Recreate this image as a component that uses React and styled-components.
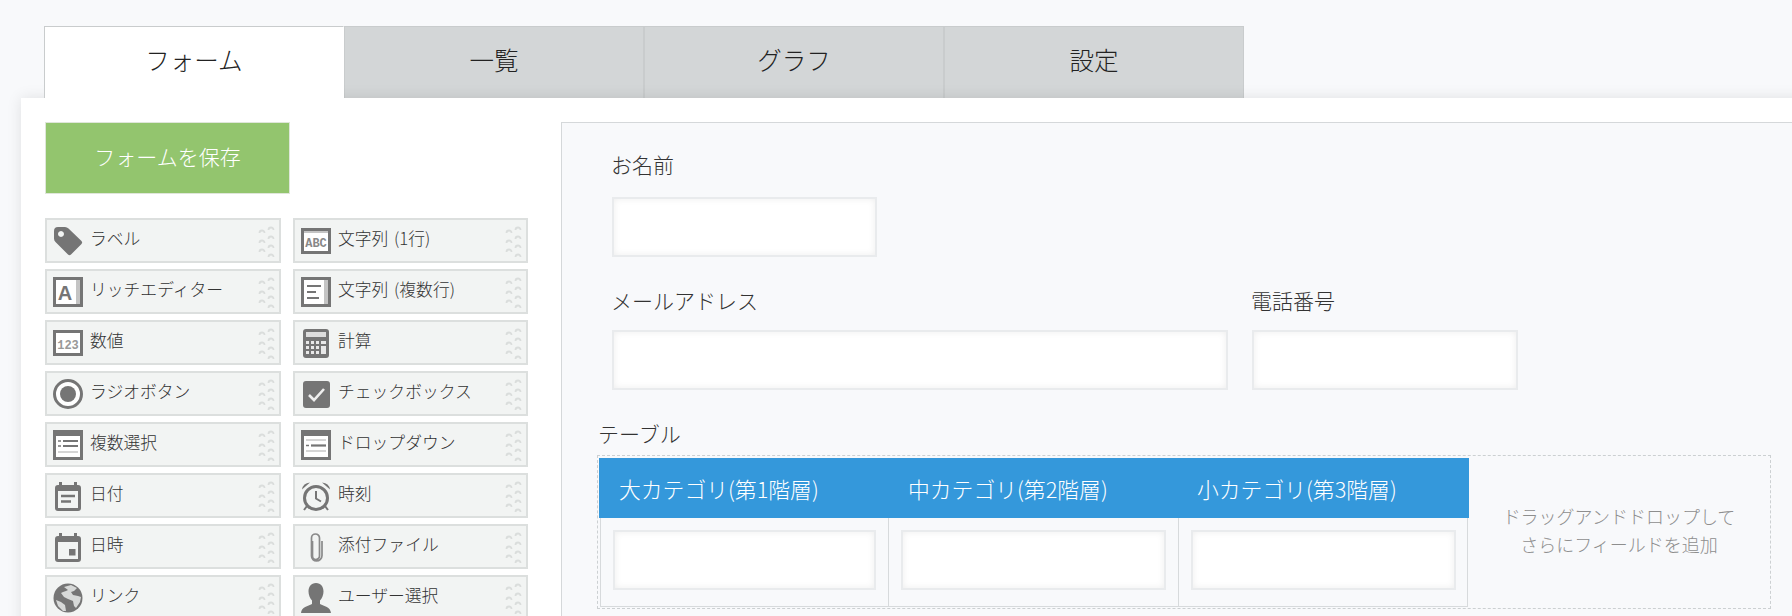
import React from "react";
import styled, { createGlobalStyle } from "styled-components";

const Global = createGlobalStyle`
  html, body { margin: 0; padding: 0; background: #f8f9fb; }
  body { font-family: "Noto Sans CJK JP", "Noto Sans", sans-serif; color: #333; }
  #root { width: 1792px; height: 616px; overflow: hidden; }
`;

const Page = styled.div`
  width: 1792px;
  height: 616px;
  padding-top: 26px;
  box-sizing: border-box;
  overflow: hidden;
`;
const Tabs = styled.div`
  display: flex;
  margin-left: 44px;
  height: 72px;
`;
const Tab = styled.div`
  width: 300px;
  box-sizing: border-box;
  height: 72px;
  display: flex;
  align-items: center;
  justify-content: center;
  padding-bottom: 7px;
  font-size: 24.500px;
  font-weight: 300;
  color: #222;
  background: ${(p) => (p.$active ? "#fff" : "#d3d6d7")};
  border: 1px solid #c9cccd;
  border-bottom: none;
  border-right-color: ${(p) => (p.$active ? "#fff" : "#c9cccd")};
  ${(p) => p.$active && "position: relative; z-index: 2;"}
`;
const Panel = styled.div`
  position: relative;
  z-index: 1;
  margin-left: 21px;
  width: 1800px;
  height: 540px;
  background: #fff;
  box-shadow: 0 0 14px rgba(0, 0, 0, 0.1);
  display: flex;
  padding: 24px 0 0 24px;
  box-sizing: border-box;
`;
const Sidebar = styled.div`
  width: 516px;
  flex: none;
`;
const SaveButton = styled.div`
  width: 245px;
  height: 72px;
  box-sizing: border-box;
  background: #93c56e;
  border: 1px solid #dfe6da;
  color: #fff;
  font-size: 21px;
  font-weight: 300;
  display: flex;
  align-items: center;
  justify-content: center;
  padding-bottom: 5px;
  margin-bottom: 24px;
`;
const Palette = styled.div`
  display: grid;
  grid-template-columns: 236px 235px;
  column-gap: 12px;
  row-gap: 6px;
`;
const Item = styled.div`
  height: 45px;
  box-sizing: border-box;
  border: 2px solid #dcdfde;
  background: #f2f4f3;
  display: flex;
  align-items: center;
  padding: 0 3px 0 6px;
  font-size: 16.800px;
  font-weight: 300;
  color: #333;
`;
const IconBox = styled.svg`
  width: 30px;
  height: 30px;
  flex: none;
  margin-right: 7px;
`;
const ItemLabel = styled.span`
  flex: 1;
  white-space: nowrap;
  line-height: 1;
  padding-bottom: 4px;
  word-spacing: 2px;
`;
const Grip = styled.svg`
  width: 18px;
  height: 36px;
  flex: none;
`;
const Canvas = styled.div`
  flex: 1;
  height: 600px;
  background: #f8f9fb;
  border: 1px solid #d5d8da;
  padding-top: 27px;
  box-sizing: border-box;
`;
const Row = styled.div`
  display: flex;
  gap: 24px;
  padding-left: 50px;
  margin-bottom: ${(p) => p.$mb}px;
`;
const Field = styled.div`
  width: ${(p) => p.$w}px;
`;
const Label = styled.div`
  height: 30px;
  line-height: 28px;
  font-size: 21px;
  font-weight: 300;
  color: #333;
  margin-left: -1px;
  margin-bottom: ${(p) => p.$mb ?? 17}px;
  white-space: nowrap;
`;
const Input = styled.div`
  height: 60px;
  box-sizing: border-box;
  background: #fff;
  border: 2px solid #e9ebed;
  box-shadow: inset 0 0 7px rgba(0, 0, 0, 0.07);
`;
const TableSection = styled.div`
  padding-left: 35px;
`;
const TableLabel = styled(Label)`
  margin: 0 0 6px 1px;
`;
const DropFrame = styled.div`
  width: 1174px;
  height: 154px;
  box-sizing: border-box;
  border: 1px dashed #ccd0d2;
  padding: 2px 1px;
  display: flex;
`;
const Table = styled.div`
  width: 870px;
  flex: none;
`;
const HeaderRow = styled.div`
  display: grid;
  grid-template-columns: 289px 290px 291px;
  height: 60px;
  background: #3498db;
  color: #fff;
  font-size: 21.800px;
  font-weight: 300;
`;
const HeaderCell = styled.div`
  padding: 0 0 0 ${(p) => p.$pl}px;
  display: flex;
  align-items: center;
  white-space: nowrap;
`;
const BodyRow = styled.div`
  display: grid;
  grid-template-columns: 288px 290px 289px;
  height: 89px;
  box-sizing: border-box;
  margin: 0 1px;
  border: 1px solid #d7dadc;
  border-top: none;
`;
const BodyCell = styled.div`
  padding: 12px 12px 0;
  border-right: ${(p) => (p.$last ? "none" : "1px solid #d7dadc")};
`;
const DropHint = styled.div`
  flex: 1;
  display: flex;
  align-items: center;
  justify-content: center;
  text-align: center;
  font-size: 18px;
  font-weight: 300;
  line-height: 28px;
  color: #8e8e8e;
  padding-bottom: 4px;
`;

const C = "#757575";
const Frame = ({ y = 1.5, h = 27 }) => (
  <rect x="1.5" y={y} width="27" height={h} fill="#fff" stroke={C} strokeWidth="3" />
);
const icons = {
  tag: (
    <path fill={C} fillRule="evenodd" d="M1 5a4 4 0 0 1 4-4h7q2 0 3.5 1.5L28.5 15q1.5 1.5 0 3L18 28.500q-1.500 1.500-3 0L2.500 16Q1 14.500 1 12.500zM8 5a3 3 0 1 0 .01 0z" />
  ),
  rich: (
    <>
      <Frame />
      <rect x="23" y="3" width="4" height="24" fill="#c4c4c4" />
      <text x="12" y="23" fontFamily="Liberation Sans" fontWeight="700" fontSize="20" fill={C} textAnchor="middle">A</text>
    </>
  ),
  num: (
    <>
      <Frame y={3.5} h={23} />
      <text x="15" y="20.500" fontFamily="Liberation Mono" fontWeight="700" fontSize="12" fill="#999" textAnchor="middle">123</text>
    </>
  ),
  abc: (
    <>
      <Frame y={3.5} h={23} />
      <rect x="3" y="5" width="24" height="2" fill="#c4c4c4" />
      <text x="15" y="20.500" fontFamily="Liberation Mono" fontWeight="700" fontSize="12" fill="#888" textAnchor="middle">ABC</text>
    </>
  ),
  radio: (
    <>
      <circle cx="15" cy="15" r="13.500" fill="#fff" stroke={C} strokeWidth="3" />
      <circle cx="15" cy="15" r="8" fill={C} />
    </>
  ),
  multi: (
    <>
      <Frame />
      <rect x="3" y="3" width="24" height="3" fill={C} />
      <path d="M10 11h15M10 16h15" stroke={C} strokeWidth="2.200" />
      <path d="M5 11h3M5 16h3" stroke={C} strokeWidth="1.500" />
      <rect x="5" y="21" width="20" height="2" fill="#d5d5d5" />
    </>
  ),
  lines: (
    <>
      <Frame />
      <rect x="23" y="3" width="4" height="24" fill="#c4c4c4" />
      <path d="M6 9h14M6 15h9M6 21h12" stroke={C} strokeWidth="2.200" />
    </>
  ),
  calc: (
    <>
      <rect x="2" y="1" width="26" height="29" rx="3" fill={C} />
      <rect x="5" y="4" width="20" height="5" fill="#ddd" />
      <path d="M5 13h3v3H5zM10 13h3v3h-3zM15 13h3v3h-3zM20 13h5v3h-5zM5 18h3v3H5zM10 18h3v3h-3zM15 18h3v3h-3zM5 23h3v3H5zM10 23h3v3h-3zM15 23h3v3h-3zM20 18h5v8h-5z" fill="#e8e8e8" />
    </>
  ),
  check: (
    <>
      <rect x="2" y="2" width="27" height="27" rx="3" fill={C} />
      <path d="M8 16l5 5 10-11" fill="none" stroke="#eee" strokeWidth="2.600" />
    </>
  ),
  drop: (
    <>
      <Frame />
      <rect x="3" y="3" width="24" height="3" fill={C} />
      <rect x="5" y="9" width="20" height="2" fill="#d5d5d5" />
      <path d="M10 15.500h15" stroke={C} strokeWidth="2.200" />
      <path d="M5 15.500h3" stroke={C} strokeWidth="1.500" />
      <rect x="5" y="20" width="20" height="2" fill="#d5d5d5" />
    </>
  ),
  date: (
    <>
      <path fill={C} fillRule="evenodd" d="M6 1h3v3h12V1h3v3h1a3 3 0 0 1 3 3v20a3 3 0 0 1-3 3H5a3 3 0 0 1-3-3V7a3 3 0 0 1 3-3h1zM5 10v17h20V10z" />
      <path d="M8 15h14M8 20.500h10" stroke={C} strokeWidth="2.400" />
    </>
  ),
  datetime: (
    <>
      <path fill={C} fillRule="evenodd" d="M6 1h3v3h12V1h3v3h1a3 3 0 0 1 3 3v20a3 3 0 0 1-3 3H5a3 3 0 0 1-3-3V7a3 3 0 0 1 3-3h1zM5 10v17h20V10z" />
      <rect x="16" y="17" width="6.500" height="6.500" fill={C} />
    </>
  ),
  clock: (
    <>
      <circle cx="15" cy="17" r="11.500" fill="#f2f4f3" stroke={C} strokeWidth="3" />
      <path d="M15 10v7.500l5 3" fill="none" stroke={C} strokeWidth="2" />
      <path d="M1 8.500Q2 2 9 1.500zM29 8.500Q28 2 21 1.500z" fill={C} />
      <path d="M6 25l-3 4M24 25l3 4" stroke={C} strokeWidth="2" />
    </>
  ),
  clip: (
    <path d="M11 9v15a3.500 3.500 0 0 0 7 0V6a4 4 0 0 0-8 0v18a5 5 0 0 0 5 5h0a5.500 5.500 0 0 0 5.500-5.500V9" transform="translate(.5 0)" fill="none" stroke="#8a8a8a" strokeWidth="1.700" />
  ),
  globe: (
    <>
      <circle cx="15" cy="15" r="14.500" fill={C} />
      <path d="M11 4l7-2 6 3-3 3-3 1 2 3 5 1 3 1-1 5-4 6-2-2-1-5-5-2-4-2-3-4 2-1 3-1 2-1z" fill="#e2e4e3" opacity=".9" />
      <path d="M3 17l5 2 4 3 1 6-3 0-5-5z" fill="#e2e4e3" opacity=".9" />
    </>
  ),
  user: (
    <path fill={C} d="M15 0c5 0 7.500 4 7.500 8.500 0 3.500-1.500 7-3.500 9v3.500c4 2 10.500 3 11 9H0c.5-6 7-7 11-9v-3.500c-2-2-3.500-5.500-3.500-9C7.500 4 10 0 15 0z" />
  ),
};

const GripIcon = () => (
  <Grip viewBox="0 0 18 36">
    {[[4, 9], [4, 19], [4, 28], [13, 6], [13, 15], [13, 24], [13, 33]].map(([x, y]) => (
      <path key={`${x}-${y}`} d={`M${x - 2.5} ${y + 1}a2.500 2.500 0 0 1 5 0`} fill="none" stroke="#dadddc" strokeWidth="1.800" />
    ))}
  </Grip>
);

const items = [
  ["tag", "ラベル"], ["abc", "文字列 (1行)"],
  ["rich", "リッチエディター"], ["lines", "文字列 (複数行)"],
  ["num", "数値"], ["calc", "計算"],
  ["radio", "ラジオボタン"], ["check", "チェックボックス"],
  ["multi", "複数選択"], ["drop", "ドロップダウン"],
  ["date", "日付"], ["clock", "時刻"],
  ["datetime", "日時"], ["clip", "添付ファイル"],
  ["globe", "リンク"], ["user", "ユーザー選択"],
];

const headers = [
  ["大カテゴリ(第1階層)", 20],
  ["中カテゴリ(第2階層)", 20],
  ["小カテゴリ(第3階層)", 19],
];

export default function App() {
  return (
    <Page>
      <Global />
      <Tabs>
        <Tab $active>フォーム</Tab>
        <Tab>一覧</Tab>
        <Tab>グラフ</Tab>
        <Tab>設定</Tab>
      </Tabs>
      <Panel>
        <Sidebar>
          <SaveButton>フォームを保存</SaveButton>
          <Palette>
            {items.map(([icon, label]) => (
              <Item key={label}>
                <IconBox viewBox="0 0 30 30">{icons[icon]}</IconBox>
                <ItemLabel>{label}</ItemLabel>
                <GripIcon />
              </Item>
            ))}
          </Palette>
        </Sidebar>
        <Canvas>
          <Row $mb={29}>
            <Field $w={265}>
              <Label>お名前</Label>
              <Input />
            </Field>
          </Row>
          <Row $mb={29}>
            <Field $w={616}>
              <Label $mb={14}>メールアドレス</Label>
              <Input />
            </Field>
            <Field $w={266}>
              <Label $mb={14}>電話番号</Label>
              <Input />
            </Field>
          </Row>
          <TableSection>
            <TableLabel>テーブル</TableLabel>
            <DropFrame>
              <Table>
                <HeaderRow>
                  {headers.map(([h, pl]) => (
                    <HeaderCell key={h} $pl={pl}>{h}</HeaderCell>
                  ))}
                </HeaderRow>
                <BodyRow>
                  <BodyCell><Input /></BodyCell>
                  <BodyCell><Input /></BodyCell>
                  <BodyCell $last><Input /></BodyCell>
                </BodyRow>
              </Table>
              <DropHint>
                ドラッグアンドドロップして
                <br />
                さらにフィールドを追加
              </DropHint>
            </DropFrame>
          </TableSection>
        </Canvas>
      </Panel>
    </Page>
  );
}
